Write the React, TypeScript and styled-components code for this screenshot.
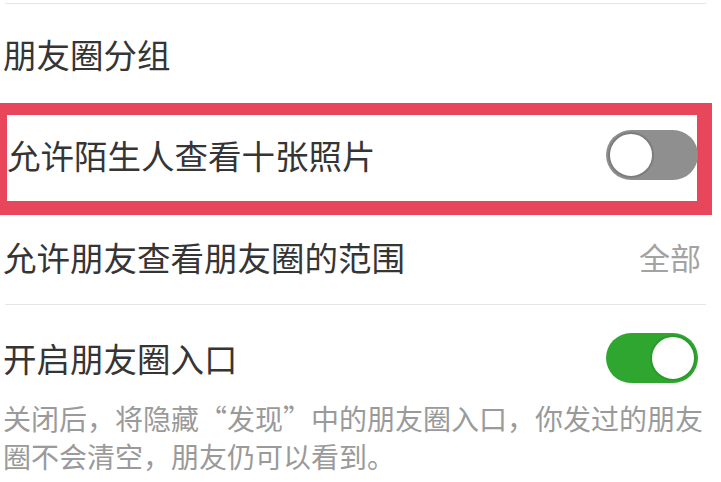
import styled, { createGlobalStyle } from "styled-components";

const GlobalStyle = createGlobalStyle`
  html, body {
    margin: 0;
    padding: 0;
    background: #ffffff;
  }
  body {
    font-family: "Noto Sans CJK SC", "Noto Sans", sans-serif;
    color: #333333;
  }
`;

type SwitchProps = { $on: boolean };

export default function App(): JSX.Element {
  return (
    <>
      <GlobalStyle />
      <Page>
        <Rule />
        <Row $height={99}>
          <Label>朋友圈分组</Label>
        </Row>
        <HighlightRow>
          <Label>允许陌生人查看十张照片</Label>
          <Switch $on={false}>
            <Knob $on={false} />
          </Switch>
        </HighlightRow>
        <Row $height={89} $shift={-3} $right={20}>
          <Label>允许朋友查看朋友圈的范围</Label>
          <Value>全部</Value>
        </Row>
        <Rule />
        <Row $height={94} $shift={6}>
          <Label>开启朋友圈入口</Label>
          <Switch $on={true}>
            <Knob $on={true} />
          </Switch>
        </Row>
        <Note>
          关闭后，将隐藏“发现”中的朋友圈入口，你发过的朋友
          <br />
          圈不会清空，朋友仍可以看到。
        </Note>
      </Page>
    </>
  );
}

const Page = styled.main`
  width: 721px;
  height: 482px;
  padding-top: 3px;
  box-sizing: border-box;
  overflow: hidden;
`;

const Rule = styled.div`
  height: 1px;
  margin: 0 15px 0 5px;
  background: #e6e6e6;
`;

const Row = styled.section<{ $height: number; $shift?: number; $right?: number }>`
  display: flex;
  align-items: center;
  justify-content: space-between;
  height: ${(p) => p.$height}px;
  box-sizing: border-box;
  padding: 0 ${(p) => p.$right ?? 23}px 0 3px;
  padding-top: ${(p) => Math.max(p.$shift ?? 0, 0) * 2}px;
  padding-bottom: ${(p) => Math.max(-(p.$shift ?? 0), 0) * 2}px;
`;

const HighlightRow = styled.section`
  display: flex;
  align-items: center;
  justify-content: space-between;
  width: 712px;
  height: 112px;
  box-sizing: border-box;
  border-style: solid;
  border-color: #e8475b;
  border-width: 12px 15px 14px 7px;
  padding: 0 0 6px 0;
`;

const Label = styled.span`
  font-size: 33.5px;
  line-height: 40px;
  color: #353535;
  white-space: nowrap;
`;

const Value = styled.span`
  font-size: 31px;
  line-height: 40px;
  color: #a3a3a3;
`;

const Switch = styled.div<SwitchProps>`
  display: flex;
  align-items: center;
  justify-content: ${(p) => (p.$on ? "flex-end" : "flex-start")};
  width: 92px;
  height: 50px;
  border-radius: 25px;
  box-sizing: border-box;
  padding: 2px;
  background: ${(p) => (p.$on ? "#2fa630" : "#8f8f8f")};
  margin-right: ${(p) => (p.$on ? 0 : -1)}px;
`;

const Knob = styled.div<SwitchProps>`
  width: 46px;
  height: 46px;
  border-radius: 50%;
  background: #ffffff;
  box-sizing: border-box;
  border: 2px solid ${(p) => (p.$on ? "#2b9a2c" : "#7d7d7d")};
`;

const Note = styled.p`
  margin: 0;
  padding-left: 3px;
  font-size: 28px;
  line-height: 38px;
  color: #9a9a9a;
  white-space: nowrap;
`;
